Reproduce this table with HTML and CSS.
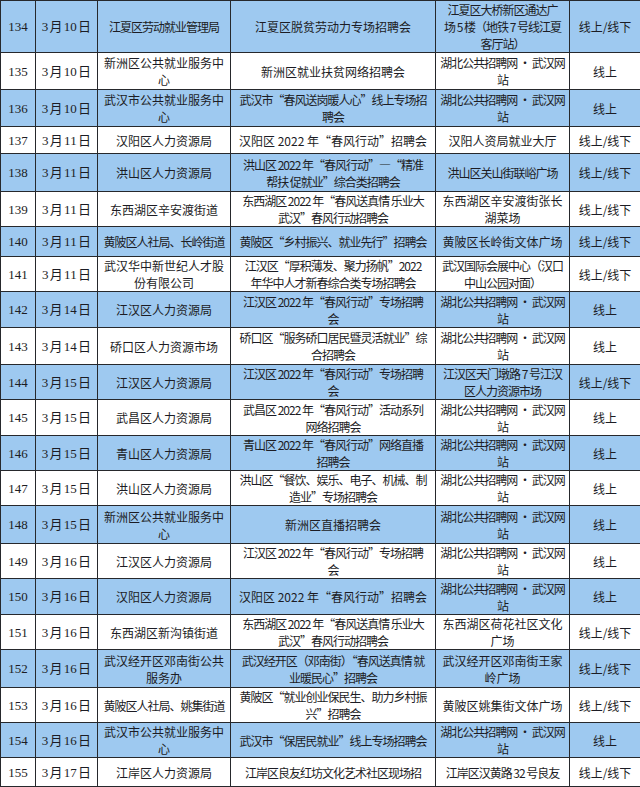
FILE: index.html
```html
<!DOCTYPE html>
<html lang="zh-CN">
<head>
<meta charset="utf-8">
<title>招聘会</title>
<link rel="stylesheet" href="styles.css">
</head>
<body>
<table class="sheet">
<colgroup>
<col class="c-no"><col class="c-date"><col class="c-org"><col class="c-name"><col class="c-place"><col class="c-mode">
</colgroup>
<tbody>
<tr class="blue h52"><td class="no">134</td><td class="date">3 月 10 日</td><td class="t1">江夏区劳动就业管理局</td><td>江夏区脱贫劳动力专场招聘会</td><td class="t1">江夏区大桥新区通达广<br>场 5 楼（地铁 7 号线江夏<br>客厅站）</td><td>线上/线下</td></tr>
<tr class="h37"><td class="no">135</td><td class="date">3 月 10 日</td><td>新洲区公共就业服务中<br>心</td><td>新洲区就业扶贫网络招聘会</td><td class="t1">湖北公共招聘网 · 武汉网<br>站</td><td>线上</td></tr>
<tr class="blue h37"><td class="no">136</td><td class="date">3 月 10 日</td><td>武汉市公共就业服务中<br>心</td><td class="t1">武汉市“春风送岗暖人心”线上专场招<br>聘会</td><td class="t1">湖北公共招聘网 · 武汉网<br>站</td><td>线上</td></tr>
<tr class="h27"><td class="no">137</td><td class="date">3 月 11 日</td><td>汉阳区人力资源局</td><td>汉阳区 2022 年“春风行动”招聘会</td><td>汉阳人资局就业大厅</td><td>线上/线下</td></tr>
<tr class="blue h38"><td class="no">138</td><td class="date">3 月 11 日</td><td>洪山区人力资源局</td><td class="t1">洪山区 2022 年“春风行动”—“精准<br>帮扶 促就业”综合类招聘会</td><td class="t1">洪山区关山街联峪广场</td><td>线上/线下</td></tr>
<tr class="h35"><td class="no">139</td><td class="date">3 月 11 日</td><td>东西湖区辛安渡街道</td><td class="t1">东西湖区 2022 年“春风送真情 乐业大<br>武汉”春风行动招聘会</td><td>东西湖区辛安渡街张长<br>湖菜场</td><td>线上/线下</td></tr>
<tr class="blue h30"><td class="no">140</td><td class="date">3 月 11 日</td><td class="t1">黄陂区人社局、长岭街道</td><td class="t1">黄陂区“乡村振兴、就业先行”招聘会</td><td>黄陂区长岭街文体广场</td><td>线上/线下</td></tr>
<tr class="h33"><td class="no">141</td><td class="date">3 月 11 日</td><td>武汉华中新世纪人才股<br>份有限公司</td><td class="t1">江汉区“厚积薄发、聚力扬帆”2022<br>年华中人才新春综合类专场招聘会</td><td class="t1">武汉国际会展中心（汉口<br>中山公园对面）</td><td>线上/线下</td></tr>
<tr class="blue h36"><td class="no">142</td><td class="date">3 月 14 日</td><td>江汉区人力资源局</td><td class="t1">江汉区 2022 年“春风行动”专场招聘<br>会</td><td class="t1">湖北公共招聘网 · 武汉网<br>站</td><td>线上</td></tr>
<tr class="h37"><td class="no">143</td><td class="date">3 月 14 日</td><td>硚口区人力资源市场</td><td class="t1">硚口区“服务硚口居民暨灵活就业”综<br>合招聘会</td><td class="t1">湖北公共招聘网 · 武汉网<br>站</td><td>线上</td></tr>
<tr class="blue h35"><td class="no">144</td><td class="date">3 月 15 日</td><td>江汉区人力资源局</td><td class="t1">江汉区 2022 年“春风行动”专场招聘<br>会</td><td class="t1">江汉区天门墩路 7 号江汉<br>区人力资源市场</td><td>线上/线下</td></tr>
<tr class="h36"><td class="no">145</td><td class="date">3 月 15 日</td><td>武昌区人力资源局</td><td class="t1">武昌区 2022 年“春风行动”活动系列<br>网络招聘会</td><td class="t1">湖北公共招聘网 · 武汉网<br>站</td><td>线上</td></tr>
<tr class="blue h35"><td class="no">146</td><td class="date">3 月 15 日</td><td>青山区人力资源局</td><td class="t1">青山区 2022 年“春风行动”网络直播<br>招聘会</td><td class="t1">湖北公共招聘网 · 武汉网<br>站</td><td>线上</td></tr>
<tr class="h35"><td class="no">147</td><td class="date">3 月 15 日</td><td>洪山区人力资源局</td><td class="t1">洪山区“餐饮、娱乐、电子、机械、制<br>造业”专场招聘会</td><td class="t1">湖北公共招聘网 · 武汉网<br>站</td><td>线上</td></tr>
<tr class="blue h38"><td class="no">148</td><td class="date">3 月 15 日</td><td>新洲区公共就业服务中<br>心</td><td>新洲区直播招聘会</td><td class="t1">湖北公共招聘网 · 武汉网<br>站</td><td>线上</td></tr>
<tr class="h35"><td class="no">149</td><td class="date">3 月 16 日</td><td>江汉区人力资源局</td><td class="t1">江汉区 2022 年“春风行动”专场招聘<br>会</td><td class="t1">湖北公共招聘网 · 武汉网<br>站</td><td>线上</td></tr>
<tr class="blue h36"><td class="no">150</td><td class="date">3 月 16 日</td><td>汉阳区人力资源局</td><td>汉阳区 2022 年“春风行动”招聘会</td><td class="t1">湖北公共招聘网 · 武汉网<br>站</td><td>线上</td></tr>
<tr class="h35"><td class="no">151</td><td class="date">3 月 16 日</td><td>东西湖区新沟镇街道</td><td class="t1">东西湖区 2022 年“春风送真情 乐业大<br>武汉”春风行动招聘会</td><td>东西湖区荷花社区文化<br>广场</td><td>线上/线下</td></tr>
<tr class="blue h38"><td class="no">152</td><td class="date">3 月 16 日</td><td>武汉经开区邓南街公共<br>服务办</td><td class="t1">武汉经开区（邓南街）“春风送真情 就<br>业暖民心”招聘会</td><td>武汉经开区邓南街王家<br>岭广场</td><td>线上/线下</td></tr>
<tr class="h35"><td class="no">153</td><td class="date">3 月 16 日</td><td class="t1">黄陂区人社局、姚集街道</td><td class="t1">黄陂区“就业创业保民生、助力乡村振<br>兴”招聘会</td><td>黄陂区姚集街文体广场</td><td>线上/线下</td></tr>
<tr class="blue h35"><td class="no">154</td><td class="date">3 月 16 日</td><td>武汉市公共就业服务中<br>心</td><td class="t1">武汉市“保居民就业”线上专场招聘会</td><td class="t1">湖北公共招聘网 · 武汉网<br>站</td><td>线上</td></tr>
<tr class="h29 last"><td class="no">155</td><td class="date">3 月 17 日</td><td>江岸区人力资源局</td><td class="t1">江岸区良友红坊文化艺术社区现场招</td><td class="t1">江岸区汉黄路 32 号良友</td><td>线上/线下</td></tr>
</tbody>
</table>
</body>
</html>
```

FILE: styles.css
```css
html, body {
  margin: 0;
  padding: 0;
  background: #f2f2f2;
}

.sheet {
  border-collapse: collapse;
  table-layout: fixed;
  width: 640px;
  background: #ffffff;
  font-family: "Noto Sans CJK SC", "Noto Sans", sans-serif;
  font-size: 12px;
  line-height: 17px;
  color: #1c1c24;
}

.c-no { width: 35px; }
.c-date { width: 62px; }
.c-org { width: 133px; }
.c-name { width: 205px; }
.c-place { width: 134px; }
.c-mode { width: 71px; }

.sheet td {
  border: 1px solid #26282c;
  padding: 0;
  text-align: center;
  vertical-align: middle;
  white-space: nowrap;
  overflow: hidden;
}

.sheet tr.blue td {
  background: #9ec9f0;
}

.sheet td.no {
  font-family: "Liberation Serif", "Noto Sans CJK SC", serif;
  font-size: 13px;
}

.sheet td.date {
  font-family: "Liberation Serif", "Noto Sans CJK SC", serif;
  font-size: 13px;
  word-spacing: -2px;
}

.sheet td.t1 {
  letter-spacing: -1px;
}

.h27 { height: 27px; }
.h29 { height: 29px; }
.h30 { height: 30px; }
.h33 { height: 33px; }
.h35 { height: 35px; }
.h36 { height: 36px; }
.h37 { height: 37px; }
.h38 { height: 38px; }
.h52 { height: 52px; }
```
